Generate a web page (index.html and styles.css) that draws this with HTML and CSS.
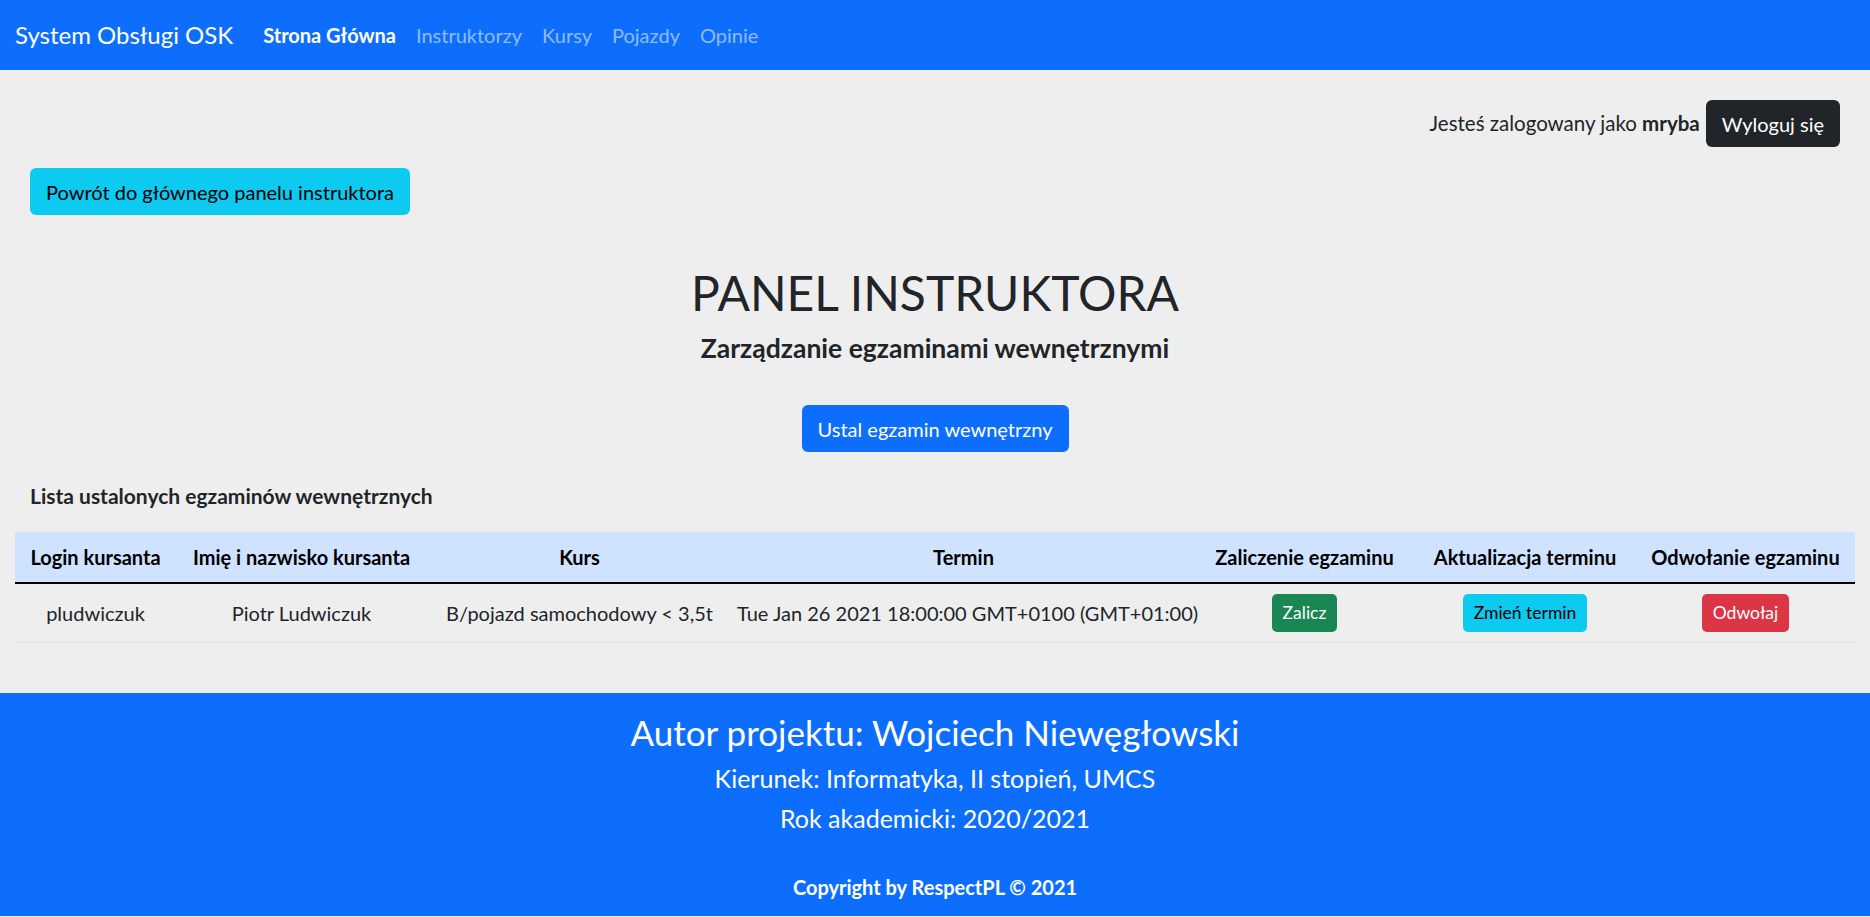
FILE: index.html
```html
<!DOCTYPE html>
<html lang="pl">
<head>
<meta charset="utf-8">
<title>System Obsługi OSK</title>
<link rel="stylesheet" href="styles.css">
</head>
<body>
<nav class="navbar">
  <a class="brand" href="#">System Obsługi OSK</a>
  <ul class="nav">
    <li><a class="nav-link active" href="#">Strona Główna</a></li>
    <li><a class="nav-link" href="#">Instruktorzy</a></li>
    <li><a class="nav-link" href="#">Kursy</a></li>
    <li><a class="nav-link" href="#">Pojazdy</a></li>
    <li><a class="nav-link" href="#">Opinie</a></li>
  </ul>
</nav>
<main class="main">
  <div class="user-row">
    <span class="user-text">Jesteś zalogowany jako <b>mryba</b></span>
    <button class="btn btn-dark">Wyloguj się</button>
  </div>
  <div class="back-row">
    <button class="btn btn-info">Powrót do głównego panelu instruktora</button>
  </div>
  <section class="hero">
    <h1 class="title">PANEL INSTRUKTORA</h1>
    <h2 class="subtitle">Zarządzanie egzaminami wewnętrznymi</h2>
    <button class="btn btn-primary">Ustal egzamin wewnętrzny</button>
  </section>
  <h3 class="list-title">Lista ustalonych egzaminów wewnętrznych</h3>
  <table class="table">
    <colgroup>
      <col class="c1"><col class="c2"><col class="c3"><col class="c4"><col class="c5"><col class="c6"><col class="c7">
    </colgroup>
    <thead>
      <tr>
        <th>Login kursanta</th>
        <th>Imię i nazwisko kursanta</th>
        <th>Kurs</th>
        <th>Termin</th>
        <th>Zaliczenie egzaminu</th>
        <th>Aktualizacja terminu</th>
        <th>Odwołanie egzaminu</th>
      </tr>
    </thead>
    <tbody>
      <tr>
        <td>pludwiczuk</td>
        <td>Piotr Ludwiczuk</td>
        <td>B/pojazd samochodowy &lt; 3,5t</td>
        <td>Tue Jan 26 2021 18:00:00 GMT+0100 (GMT+01:00)</td>
        <td><button class="btn btn-sm btn-success">Zalicz</button></td>
        <td><button class="btn btn-sm btn-info">Zmień termin</button></td>
        <td><button class="btn btn-sm btn-danger">Odwołaj</button></td>
      </tr>
    </tbody>
  </table>
</main>
<footer class="footer">
  <p class="f-author">Autor projektu: Wojciech Niewęgłowski</p>
  <p class="f-line">Kierunek: Informatyka, II stopień, UMCS</p>
  <p class="f-line">Rok akademicki: 2020/2021</p>
  <p class="f-copy">Copyright by RespectPL © 2021</p>
</footer>
</body>
</html>
```
FILE: styles.css
```css
* { box-sizing: border-box; }
html, body { margin: 0; padding: 0; }
body {
  background: #eeeeee;
  color: #212529;
  font-family: "Lato", "Liberation Sans", sans-serif;
  font-size: 20px;
  line-height: 1.5;
}
.navbar {
  height: 70px;
  background: #0d6efd;
  display: flex;
  align-items: center;
  padding: 0 15px;
}
.brand {
  color: #fff;
  text-decoration: none;
  font-size: 24px;
  margin-right: 20px;
}
.nav {
  display: flex;
  list-style: none;
  margin: 0;
  padding: 0;
}
.nav-link {
  display: block;
  padding: 10px;
  color: rgba(255,255,255,0.55);
  text-decoration: none;
  font-size: 20px;
}
.nav-link.active { color: #fff; font-weight: 700; }

.main { padding: 0 15px 50px; }
.user-row {
  display: flex;
  justify-content: flex-end;
  align-items: center;
  gap: 6px;
  padding: 30px 15px 0;
}
.user-text { font-size: 20.5px; }
.user-text b { font-weight: 700; }
.back-row { padding: 21px 15px 0; }

.btn {
  display: inline-block;
  font-family: inherit;
  font-size: 20px;
  line-height: 1.5;
  padding: 7.5px 15px;
  border: 1.25px solid transparent;
  border-radius: 6px;
  cursor: pointer;
}
.btn-sm {
  font-size: 17.5px;
  padding: 5px 10px;
  border-radius: 5px;
}
.btn-dark { background: #212529; color: #fff; }
.btn-info { background: #0dcaf0; color: #000; }
.btn-primary { background: #0d6efd; color: #fff; }
.btn-success { background: #198754; color: #fff; }
.btn-danger { background: #dc3545; color: #fff; }

.hero {
  text-align: center;
  padding-top: 48px;
}
.title {
  margin: 0 0 10px;
  font-size: 48px;
  line-height: 60px;
  font-weight: 400;
}
.subtitle {
  margin: 0 0 42px;
  font-size: 26.5px;
  line-height: 30px;
  font-weight: 700;
}
.list-title {
  margin: 29px 15px 21px;
  font-size: 21px;
  line-height: 30px;
  font-weight: 700;
}
.table {
  width: 100%;
  border-collapse: collapse;
  table-layout: fixed;
  text-align: center;
}
.c1 { width: 161px; }
.c2 { width: 251px; }
.c3 { width: 305px; }
.c4 { width: 463px; }
.c5 { width: 219px; }
.c6 { width: 222px; }
.c7 { width: 219px; }
.table th {
  background: #cfe2ff;
  color: #000;
  font-weight: 700;
  padding: 10px 5px;
  border-bottom: 2px solid #000;
  white-space: nowrap;
}
.table td {
  padding: 10px 5px;
  border-bottom: 1px solid #dee2e6;
  white-space: nowrap;
  vertical-align: middle;
}

.footer {
  background: #0d6efd;
  color: #fff;
  text-align: center;
  padding: 18px 0 14px;
}
.footer p { margin: 0; }
.f-author { font-size: 35px; line-height: 42px; margin-bottom: 10px !important; }
.f-line { font-size: 25px; line-height: 30px; margin-bottom: 10px !important; }
.f-line + .f-line { margin-bottom: 39px !important; }
.f-copy { font-size: 20px; line-height: 30px; font-weight: 700; }
```
